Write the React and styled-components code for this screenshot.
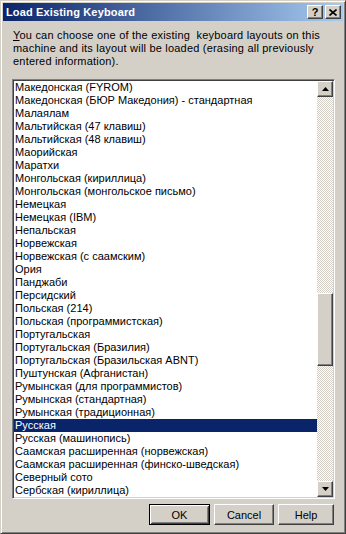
import React from 'react';
import styled, { createGlobalStyle, css } from 'styled-components';

const Global = createGlobalStyle`
  html, body { margin: 0; padding: 0; background: #D4D0C8; }
  body { font-family: "Liberation Sans", Arial, sans-serif; }
  * { box-sizing: border-box; }
`;

const raised = css`
  border: 1px solid;
  border-color: #FFFFFF #404040 #404040 #FFFFFF;
  box-shadow: inset -1px -1px #808080, inset 1px 1px #D4D0C8;
  background: #D4D0C8;
`;

const Window = styled.div`
  width: 346px;
  height: 534px;
  background: #D4D0C8;
  border: 1px solid;
  border-color: #D4D0C8 #404040 #404040 #D4D0C8;
  box-shadow: inset 1px 1px #FFFFFF, inset -1px -1px #808080;
  padding: 2px;
  display: flex;
  flex-direction: column;
`;

const TitleBar = styled.div`
  height: 18px;
  background: linear-gradient(to right, #0A246A, #A6CAF0);
  display: flex;
  align-items: center;
  padding: 0 2px 0 3px;
`;

const Title = styled.div`
  flex: 1;
  color: #FFFFFF;
  font-weight: bold;
  font-size: 11px;
  letter-spacing: 0.15px;
  white-space: nowrap;
`;

const TitleButtons = styled.div`
  display: flex;
  gap: 2px;
`;

const TitleButton = styled.div`
  ${raised};
  width: 16px;
  height: 14px;
  display: flex;
  align-items: center;
  justify-content: center;
  font-weight: bold;
  font-size: 11px;
  color: #000;
  line-height: 1;
`;

const Content = styled.div`
  flex: 1;
  display: flex;
  flex-direction: column;
  padding: 8px 8px 0 9px;
`;

const Intro = styled.div`
  font-size: 11px;
  line-height: 13px;
  letter-spacing: 0.2px;
  color: #000;
  padding-left: 1px;
  white-space: nowrap;
`;

const Accel = styled.span`
  text-decoration: underline;
`;

const ListBox = styled.div`
  margin-top: 11px;
  height: 420px;
  border: 1px solid;
  border-color: #808080 #FFFFFF #FFFFFF #808080;
  box-shadow: inset 1px 1px #404040, inset -1px -1px #D4D0C8;
  padding: 1px;
  display: flex;
  background: #FFFFFF;
`;

const Items = styled.div`
  flex: 1;
  overflow: hidden;
  display: flex;
  flex-direction: column;
`;

const Item = styled.div`
  height: 13px;
  line-height: 13px;
  font-size: 11px;
  padding-left: 1px;
  white-space: nowrap;
  overflow: hidden;
  color: ${p => (p.$selected ? '#FFFFFF' : '#000000')};
  background: ${p => (p.$selected ? '#0A246A' : 'transparent')};
`;

const ScrollBar = styled.div`
  width: 16px;
  display: flex;
  flex-direction: column;
`;

const ScrollButton = styled.div`
  ${raised};
  width: 16px;
  height: 16px;
  display: flex;
  align-items: center;
  justify-content: center;
  flex: none;
`;

const Track = styled.div`
  flex: 1;
  display: flex;
  flex-direction: column;
  background: repeating-conic-gradient(#FFFFFF 0 25%, #D4D0C8 0 50%) 0 0 / 2px 2px;
`;

const Thumb = styled.div`
  ${raised};
  width: 16px;
  height: ${p => p.$size}px;
  margin-top: ${p => p.$offset}px;
  flex: none;
`;

const ButtonRow = styled.div`
  display: flex;
  justify-content: flex-end;
  gap: 4px;
  margin-top: 5px;
  padding-right: 1px;
`;

const Button = styled.div`
  width: ${p => p.$w}px;
  height: 21px;
  display: flex;
  align-items: center;
  justify-content: center;
  font-size: 11px;
  color: #000;
  ${p =>
    p.$default
      ? css`
          border: 1px solid #000;
          background: #D4D0C8;
          box-shadow: inset 1px 1px #FFFFFF, inset -1px -1px #404040,
            inset 2px 2px #D4D0C8, inset -2px -2px #808080;
        `
      : raised}
`;

const Arrow = ({ down }) => (
  <svg width="7" height="4" viewBox="0 0 7 4" style={{ display: 'block' }}>
    {down ? (
      <polygon points="0,0 7,0 3.5,4" fill="#000" />
    ) : (
      <polygon points="3.5,0 7,4 0,4" fill="#000" />
    )}
  </svg>
);

const CloseGlyph = () => (
  <svg width="8" height="7" viewBox="0 0 8 7" style={{ display: 'block' }}>
    <path d="M0.5 0.5 L7.5 6.5 M7.5 0.5 L0.5 6.5" stroke="#000" strokeWidth="1.6" />
  </svg>
);

const items = [
  'Македонская (FYROM)',
  'Македонская (БЮР Македония) - стандартная',
  'Малаялам',
  'Мальтийская (47 клавиш)',
  'Мальтийская (48 клавиш)',
  'Маорийская',
  'Маратхи',
  'Монгольская (кириллица)',
  'Монгольская (монгольское письмо)',
  'Немецкая',
  'Немецкая (IBM)',
  'Непальская',
  'Норвежская',
  'Норвежская (с саамским)',
  'Ория',
  'Панджаби',
  'Персидский',
  'Польская (214)',
  'Польская (программистская)',
  'Португальская',
  'Португальская (Бразилия)',
  'Португальская (Бразильская ABNT)',
  'Пуштунская (Афганистан)',
  'Румынская (для программистов)',
  'Румынская (стандартная)',
  'Румынская (традиционная)',
  'Русская',
  'Русская (машинопись)',
  'Саамская расширенная (норвежская)',
  'Саамская расширенная (финско-шведская)',
  'Северный сото',
  'Сербская (кириллица)',
];

export default function App() {
  return (
    <>
      <Global />
      <Window>
        <TitleBar>
          <Title>Load Existing Keyboard</Title>
          <TitleButtons>
            <TitleButton>?</TitleButton>
            <TitleButton>
              <CloseGlyph />
            </TitleButton>
          </TitleButtons>
        </TitleBar>
        <Content>
          <Intro>
            <Accel>Y</Accel>ou can choose one of the existing{'\u00a0 '}keyboard layouts on this
            <br />
            machine and its layout will be loaded (erasing all previously
            <br />
            entered information).
          </Intro>
          <ListBox>
            <Items>
              {items.map(t => (
                <Item key={t} $selected={t === 'Русская'}>
                  {t}
                </Item>
              ))}
            </Items>
            <ScrollBar>
              <ScrollButton>
                <Arrow />
              </ScrollButton>
              <Track>
                <Thumb $offset={196} $size={73} />
              </Track>
              <ScrollButton>
                <Arrow down />
              </ScrollButton>
            </ScrollBar>
          </ListBox>
          <ButtonRow>
            <Button $w={61} $default>OK</Button>
            <Button $w={60}>Cancel</Button>
            <Button $w={56}>Help</Button>
          </ButtonRow>
        </Content>
      </Window>
    </>
  );
}
